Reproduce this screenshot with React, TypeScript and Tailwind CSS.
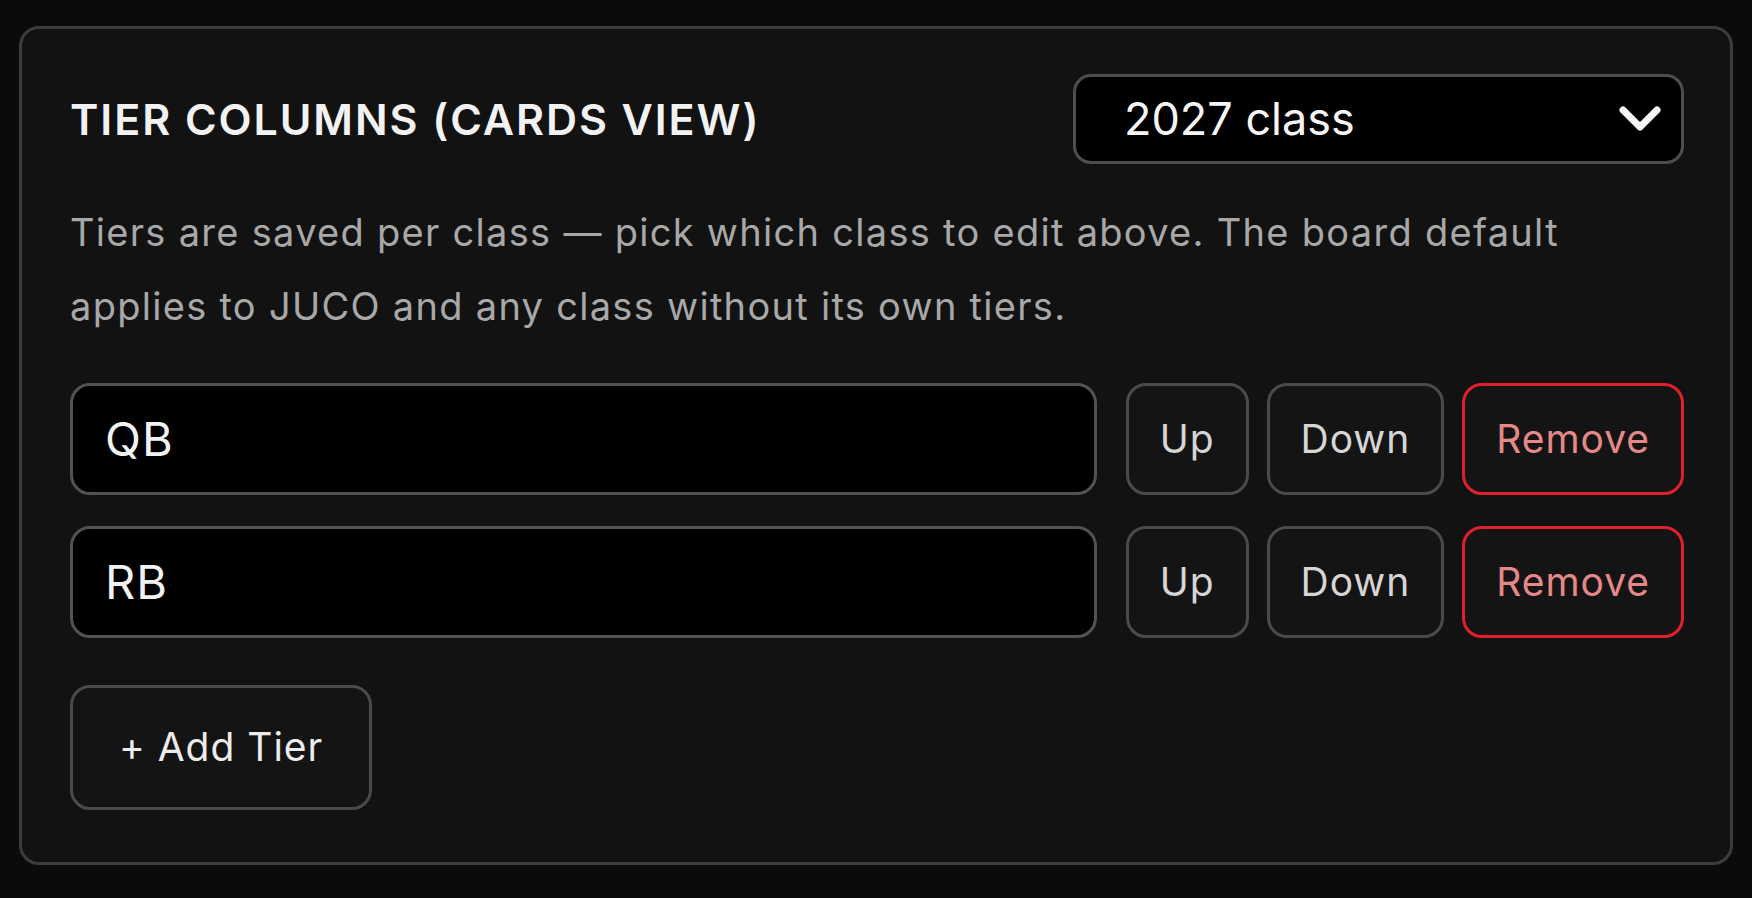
import React from "react";

const font = { fontFamily: "Inter, 'Noto Sans', 'Liberation Sans', sans-serif" };

function Row({ label }: { label: string }) {
  return (
    <div className="flex items-center gap-[29px]">
      <div className="flex-1 h-[112px] bg-black border-[3px] border-[#525252] rounded-[20px] flex items-center pl-[32px] text-[47px] tracking-[0.02em] text-[#f2f2f2]">
        {label}
      </div>
      <div className="flex items-center gap-[18px]">
        <button className="h-[112px] px-[31px] bg-[#141414] border-[3px] border-[#4a4a4a] rounded-[20px] text-[39px] tracking-[0.025em] text-[#d6d6d6]">
          Up
        </button>
        <button className="h-[112px] px-[31px] bg-[#141414] border-[3px] border-[#4a4a4a] rounded-[20px] text-[39px] tracking-[0.025em] text-[#d6d6d6]">
          Down
        </button>
        <button className="h-[112px] px-[31px] bg-[#141414] border-[3px] border-[#e0202a] rounded-[20px] text-[39px] tracking-[0.025em] text-[#e48888]">
          Remove
        </button>
      </div>
    </div>
  );
}

export default function App() {
  return (
    <div className="min-h-screen bg-[#0b0b0b] pt-[26px] pl-[19px] pr-[19px] pb-[33px]" style={font}>
      <div className="bg-[#121212] border-[3px] border-[#3c3c3c] rounded-[20px] pl-[48px] pr-[46px] pt-[45px] pb-[52px]">
        <div className="flex items-center justify-between">
          <h2 className="text-[43px] font-semibold text-[#f2f2f2] tracking-[0.045em] leading-none">
            TIER COLUMNS (CARDS VIEW)
          </h2>
          <div className="w-[611px] h-[90px] bg-black border-[3px] border-[#4e4e4e] rounded-[18px] flex items-center justify-between pl-[48px] pr-[20px]">
            <span className="text-[45px] text-[#f5f5f5]">2027 class</span>
            <svg width="42" height="26" viewBox="0 0 42 26" fill="none">
              <polyline points="4,4 21,21 38,4" stroke="#f5f5f5" strokeWidth="7" strokeLinecap="round" strokeLinejoin="round" />
            </svg>
          </div>
        </div>
        <p className="mt-[31px] text-[38px] leading-[74px] tracking-[0.034em] text-[#a8a8a8] max-w-[1560px]">
          Tiers are saved per class — pick which class to edit above. The board default applies to JUCO and any class without its own tiers.
        </p>
        <div className="mt-[40px] flex flex-col gap-[31px]">
          <Row label="QB" />
          <Row label="RB" />
        </div>
        <button className="mt-[47px] h-[125px] px-[46px] bg-[#141414] border-[3px] border-[#4a4a4a] rounded-[20px] text-[39px] tracking-[0.025em] text-[#ececec]">
          + Add Tier
        </button>
      </div>
    </div>
  );
}
